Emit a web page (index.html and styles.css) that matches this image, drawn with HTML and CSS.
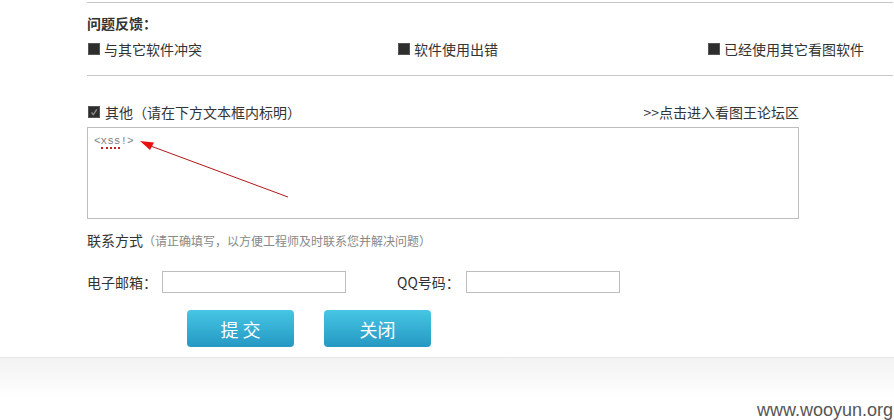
FILE: index.html
```html
<!DOCTYPE html>
<html lang="zh-CN">
<head>
<meta charset="utf-8">
<title>问题反馈</title>
<link rel="stylesheet" href="styles.css">
</head>
<body>
<div class="main">
  <div class="rule rule-top"></div>
  <div class="title">问题反馈：</div>
  <div class="options">
    <div class="opt"><span class="box"></span>与其它软件冲突</div>
    <div class="opt"><span class="box"></span>软件使用出错</div>
    <div class="opt"><span class="box"></span>已经使用其它看图软件</div>
  </div>
  <div class="rule rule-mid"></div>
  <div class="other-row">
    <div class="opt"><span class="box checked"><svg width="10" height="10" viewBox="0 0 10 10"><path d="M2.5 5.5 L4.3 7.6 L7.8 2.4" fill="none" stroke="#8a8a8a" stroke-width="1.4"/></svg></span>其他（请在下方文本框内标明）</div>
    <div class="forum">&gt;&gt;点击进入看图王论坛区</div>
  </div>
  <div class="textarea">
    <div class="ta-text">&lt;<span class="spell">xss</span>!&gt;</div>
    <svg class="arrow" width="220" height="80" viewBox="0 0 220 80">
      <line x1="200" y1="69" x2="60" y2="17" stroke="#b01818" stroke-width="1"/>
      <polygon points="52,13 66,14.5 62,22" fill="#e81010"/>
    </svg>
  </div>
  <div class="contact">联系方式<span class="note">（请正确填写，以方便工程师及时联系您并解决问题）</span></div>
  <div class="fields">
    <label class="lbl">电子邮箱：</label><span class="input email"></span>
    <label class="lbl qq">QQ号码：</label><span class="input qqin"></span>
  </div>
  <div class="buttons">
    <span class="btn">提 交</span>
    <span class="btn">关闭</span>
  </div>
</div>
<div class="footer">
  <div class="wm">www.wooyun.org</div>
</div>
</body>
</html>
```
FILE: styles.css
```css
* { box-sizing: border-box; }
html, body { margin: 0; padding: 0; background: #fff; }
body {
  font-family: "Noto Sans CJK SC", "Liberation Sans", sans-serif;
  color: #333;
  font-size: 14px;
  width: 894px;
  height: 420px;
  overflow: hidden;
}
.main { padding-left: 87px; padding-right: 1px; }
.rule { height: 1px; background: #c8c8c8; }
.rule-top { margin-top: 2px; }
.title {
  margin-top: 10px;
  line-height: 20px;
  font-weight: bold;
  font-size: 14px;
  color: #333;
}
.options {
  margin-top: 6px;
  display: grid;
  grid-template-columns: 310px 310px auto;
  line-height: 20px;
  padding-bottom: 16px;
}
.opt { display: flex; align-items: center; font-size: 14px; color: #333; }
.box {
  width: 12px; height: 12px;
  background: #2e2e2e;
  border: 1px solid #555;
  margin-left: 1px;
  margin-right: 4px;
  display: flex; align-items: center; justify-content: center;
}
.box.checked { margin-right: 5px; }
.box svg { display: block; }
.other-row {
  margin-top: 26px;
  width: 712px;
  display: flex;
  justify-content: space-between;
  line-height: 20px;
}
.forum { font-size: 14px; color: #333; }
.textarea {
  position: relative;
  margin-top: 5px;
  width: 712px;
  height: 92px;
  border: 1px solid #bdbdbd;
  background: #fff;
}
.ta-text {
  font-family: "Liberation Mono", monospace;
  font-size: 11px;
  color: #808080;
  padding: 6px 0 0 6px;
  line-height: 15px;
}
.spell { border-bottom: 2px dotted #c62020; }
.arrow { position: absolute; left: 0; top: 0; }
.contact {
  margin-top: 11px;
  line-height: 20px;
  font-size: 14px;
  color: #333;
}
.note { font-size: 12px; color: #888; }
.fields {
  margin-top: 20px;
  display: flex;
  align-items: center;
  height: 22px;
}
.lbl { font-size: 14px; color: #333; width: 75px; }
.lbl.qq { margin-left: 51px; width: 69px; }
.input {
  display: block;
  height: 22px;
  border: 1px solid #bdbdbd;
  background: #fff;
}
.email { width: 184px; }
.qqin { width: 154px; }
.buttons {
  margin-top: 17px;
  padding-left: 100px;
  display: flex;
  gap: 30px;
}
.btn {
  width: 107px;
  height: 37px;
  border-radius: 4px;
  background: linear-gradient(#46c6e4, #2598c3);
  color: #fff;
  font-size: 18px;
  display: flex;
  align-items: center;
  justify-content: center;
}
.footer {
  margin-top: 10px;
  border-top: 1px solid #e6e6e6;
  height: 64px;
  background: linear-gradient(#f3f3f3, #fff 40px);
  padding-top: 42px;
  padding-right: 1px;
}
.wm {
  text-align: right;
  font-family: "Liberation Sans", Arial, sans-serif;
  font-size: 18px;
  line-height: 20px;
  color: #555;
}
```
